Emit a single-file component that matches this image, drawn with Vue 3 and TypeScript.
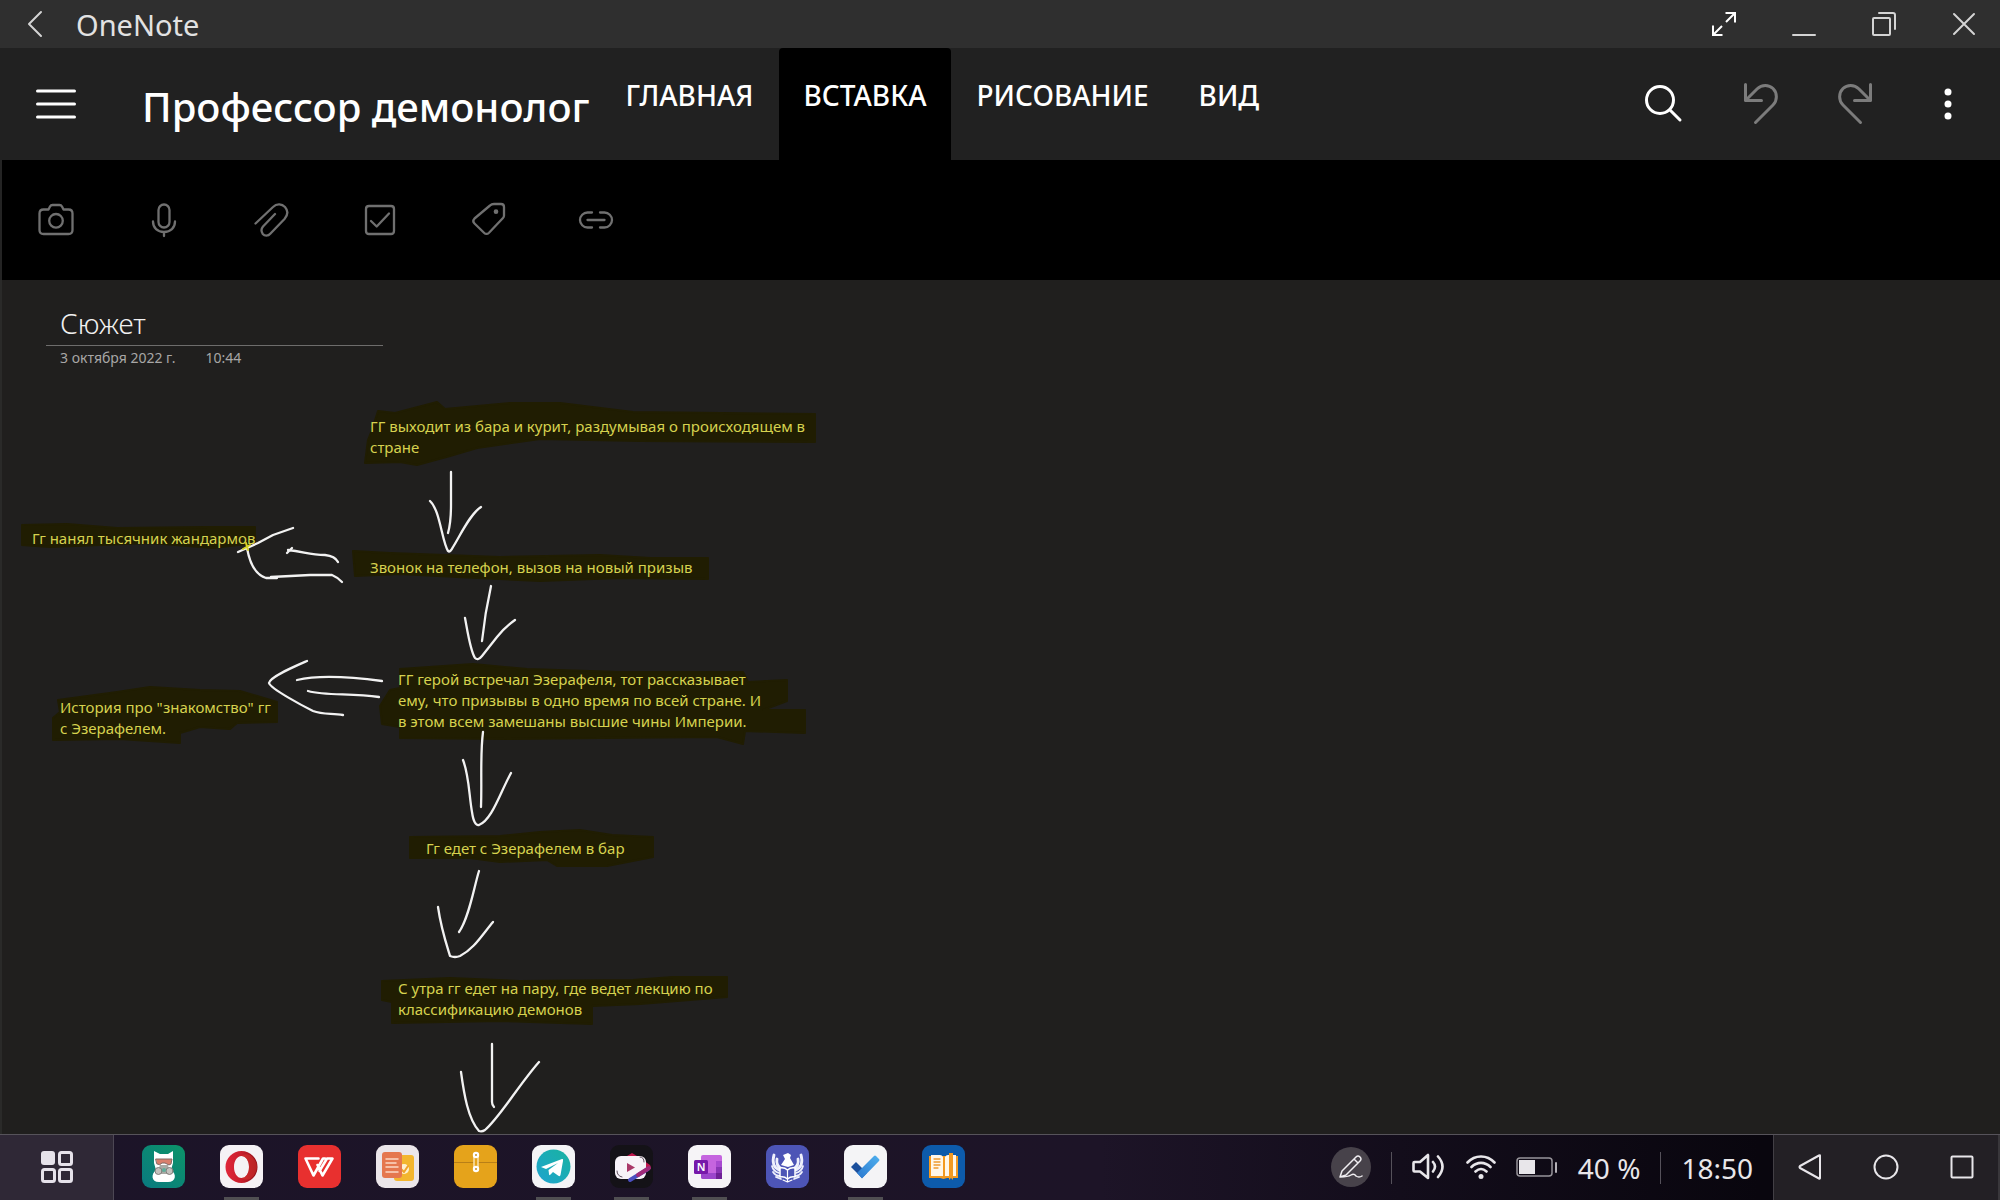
<script setup lang="ts">
interface Note {
  x: number
  y: number
  lines: string[]
}

const tabs = ['ГЛАВНАЯ', 'ВСТАВКА', 'РИСОВАНИЕ', 'ВИД']
const activeTab = 'ВСТАВКА'

const tools: { label: string; paths: string[] }[] = [
  {
    label: 'Камера',
    paths: [
      'M9.500 11.500h5l1.500-3q.8-1.500 2.500-1.500h7q1.700 0 2.500 1.500l1.500 3h5q4 0 4 4v16.500q0 4-4 4h-25q-4 0-4-4v-16.500q0-4 4-4z',
      'M22 16a6.800 6.800 0 1 1 0 13.600a6.800 6.800 0 1 1 0-13.600z',
    ],
  },
  {
    label: 'Запись звука',
    paths: [
      'M22 6.500a5.500 5.500 0 0 1 5.500 5.500v12a5.500 5.500 0 0 1-11 0v-12a5.500 5.500 0 0 1 5.500-5.500z',
      'M11 23.500c0 6.500 4.500 10.500 11 10.500s11-4 11-10.500M22 34v4',
    ],
  },
  {
    label: 'Вложение',
    paths: [
      'M5.500 25.500L23 9C27 5 32 6 35 9C38 12.500 38 17 34.500 21L20.500 35.500C18 38.500 14.500 38 12.800 36C11 33.500 11 31 13 28.500L25 16',
    ],
  },
  {
    label: 'Список дел',
    paths: [
      'M11 8h22q3 0 3 3v22q0 3-3 3h-22q-3 0-3-3v-22q0-3 3-3z',
      'M13 23l5.700 5.500L31 15.500',
    ],
  },
  {
    label: 'Тег',
    paths: [
      'M28 6h7q3 0 3 3v8.500q0 1.500-1 2.500L23 34.700q-2.500 2.500-5 0l-9.500-9.200q-2.500-2.500 0-5L24 7.500q1.500-1.500 4-1.500z',
      'M30 12.500a1.200 1.200 0 1 1 0 2.400a1.200 1.200 0 1 1 0-2.400z',
    ],
  },
  {
    label: 'Ссылка',
    paths: [
      'M18 14.500h-4.500a7.500 7.500 0 0 0 0 15H18M26 14.500h4.500a7.500 7.500 0 0 1 0 15H26M13.500 22h17',
    ],
  },
]

const notes: Note[] = [
  { x: 370, y: 136, lines: ['ГГ выходит из бара и курит, раздумывая о происходящем в', 'стране'] },
  { x: 32, y: 248, lines: ['Гг нанял тысячник жандармов'] },
  { x: 370, y: 277, lines: ['Звонок на телефон, вызов на новый призыв'] },
  {
    x: 398,
    y: 389,
    lines: [
      'ГГ герой встречал Эзерафеля, тот рассказывает',
      'ему, что призывы в одно время по всей стране. И',
      'в этом всем замешаны высшие чины Империи.',
    ],
  },
  { x: 60, y: 417, lines: ['История про "знакомство" гг', 'с Эзерафелем.'] },
  { x: 426, y: 558, lines: ['Гг едет с Эзерафелем в бар'] },
  { x: 398, y: 698, lines: ['С утра гг едет на пару, где ведет лекцию по', 'классификацию демонов'] },
]

const highlights = [
  'M378 411L395 413L437 402L445 409L510 403L560 403L633 412L815 414V442L640 441L540 439L477 448L450 456L417 465L400 462L365 463L368 440L372 430Z',
  'M353 551L390 553L500 557L600 555L650 558H708V579L620 578L540 581L457 577L400 574L355 576Z',
  'M400 669L473 664L527 669L620 672H743L748 682L787 680V701L763 710H805V733L745 731L743 744L717 737L600 738L507 739L400 738V727L382 724L380 706L390 690L400 688Z',
  'M410 837L500 836L540 832L580 830L612 835L653 837V857L607 866L557 866L547 860L500 862L470 858H410Z',
  'M382 981L450 978L520 981L633 980L673 977H727V997L640 1004L592 1006V1024L500 1021L392 1023V1002L382 1000Z',
  'M22 525L67 524L117 528L207 527H255V543L213 548L150 543L50 547L22 545Z',
  'M58 700L117 692L150 687L200 690L240 691L277 702V722L237 723L230 729L200 727L180 733V743L120 739L53 740V718L60 712Z',
]

const strokes = [
  'M451 472V505C451 518 450 526 448 533',
  'M430 501C440 510 442 542 448 551Q450 553 453 547C460 536 470 514 481 507',
  'M491 586C487 604 484 622 482 641',
  'M465 618C467 628 470 650 475 658Q478 661 482 656L497 637Q505 627 515 620',
  'M483 732C480 755 482 780 481 807',
  'M463 760C469 775 469 795 472 812Q474 826 479 825C492 820 500 793 511 773',
  'M479 871C474 887 469 918 459 932',
  'M438 907C441 928 446 943 450 956Q455 958 460 956C474 949 482 935 493 922',
  'M492 1044V1102Q492 1105 494 1107',
  'M461 1072C464 1094 468 1119 479 1131Q482 1132 485 1130C500 1117 518 1086 539 1062',
  'M238 552L258 543L273 535L293 528',
  'M247 548C250 565 256 575 266 578H277',
  'M271 577L310 575H332Q337 577 342 582',
  'M287 553L292 548M288 550C305 552 310 555 325 555Q335 556 338 562',
  'M307 661C291 668 270 677 269 683C271 689 303 706 313 711C323 715 332 713 343 715',
  'M297 680C318 675 352 677 382 681',
  'M308 691C326 696 350 693 379 697',
]
</script>

<template>
  <div class="app">
    <header class="titlebar">
      <button class="icon-btn back" aria-label="Назад">
        <svg width="16" height="28" viewBox="0 0 16 28"><path d="M14 2L2 14L14 26" /></svg>
      </button>
      <span class="app-name">OneNote</span>
      <div class="window-controls">
        <button class="icon-btn" aria-label="Развернуть">
          <svg class="bright" width="24" height="24" viewBox="0 0 24 24"><path d="M13.500 1H23V10.500M22.500 1.500L14 10M1 13.500V23H10.500M1.500 22.500L10 14" /></svg>
        </button>
        <button class="icon-btn" aria-label="Свернуть">
          <svg width="24" height="24" viewBox="0 0 24 24"><path d="M1 23H23" /></svg>
        </button>
        <button class="icon-btn" aria-label="Восстановить">
          <svg width="24" height="24" viewBox="0 0 24 24"><rect x="1" y="6" width="17" height="17" rx="1" /><path d="M7 1H21Q23 1 23 3V17" /></svg>
        </button>
        <button class="icon-btn" aria-label="Закрыть">
          <svg width="24" height="24" viewBox="0 0 24 24"><path d="M2 2L22 22M22 2L2 22" /></svg>
        </button>
      </div>
    </header>

    <div class="header">
      <button class="icon-btn menu" aria-label="Меню">
        <svg width="40" height="32" viewBox="0 0 40 32"><path d="M1.500 3H38.500M1.500 16H38.500M1.500 29H38.500" /></svg>
      </button>
      <h1>Профессор демонолог</h1>
      <nav class="tabs">
        <button v-for="tab in tabs" :key="tab" class="tab" :class="{ active: tab === activeTab }">{{ tab }}</button>
      </nav>
      <div class="actions">
        <button class="icon-btn" aria-label="Поиск">
          <svg class="search" width="48" height="48" viewBox="0 0 48 48"><circle cx="18" cy="20" r="13.500" /><path d="M28 30L38 40" /></svg>
        </button>
        <button class="icon-btn" aria-label="Отменить">
          <svg class="dim" width="48" height="48" viewBox="0 0 48 48"><path d="M9.500 4.500V20.500H25.500M9.500 20.500L21 9C26 4 33 4.500 37 8.500C41.500 13 41.500 20.500 37 25L19.500 42.500" /></svg>
        </button>
        <button class="icon-btn" aria-label="Повторить">
          <svg class="dim" width="48" height="48" viewBox="0 0 48 48"><path d="M40.500 4.500V20.500H24.500M40.500 20.500L29 9C24 4 17 4.500 13 8.500C8.500 13 8.500 20.500 13 25L30.500 42.500" /></svg>
        </button>
        <button class="icon-btn" aria-label="Ещё">
          <svg class="dots" width="48" height="48" viewBox="0 0 48 48"><circle cx="24" cy="12" r="3.500" /><circle cx="24" cy="24" r="3.500" /><circle cx="24" cy="36" r="3.500" /></svg>
        </button>
      </div>
    </div>

    <div class="toolbar">
      <button v-for="tool in tools" :key="tool.label" class="icon-btn" :aria-label="tool.label">
        <svg width="44" height="44" viewBox="0 0 44 44"><path v-for="d in tool.paths" :key="d" :d="d" /></svg>
      </button>
    </div>

    <main class="canvas">
      <svg class="layer" width="900" height="854" viewBox="0 280 900 854">
        <path v-for="d in highlights" :key="d" class="marker" :d="d" />
      </svg>
      <div class="page-title">
        <h2>Сюжет</h2>
        <p><time>3 октября 2022 г.</time><time>10:44</time></p>
      </div>
      <p v-for="note in notes" :key="note.lines[0]" class="note" :style="{ left: note.x + 'px', top: note.y + 'px' }">
        <template v-for="(line, i) in note.lines" :key="line"><br v-if="i > 0" />{{ line }}</template>
      </p>
      <svg class="layer" width="900" height="854" viewBox="0 280 900 854">
        <path v-for="d in strokes" :key="d" class="ink" :d="d" />
        <path class="cross" d="M243 549L250 545M246 543L248 550" />
      </svg>
    </main>

    <footer class="taskbar">
      <button class="icon-btn launcher" aria-label="Все приложения">
        <svg width="32" height="32" viewBox="0 0 32 32">
          <rect class="solid" x="0" y="0" width="14" height="14" rx="3" />
          <rect x="18.500" y="1.500" width="12" height="12" rx="2" />
          <rect x="1.500" y="18.500" width="12" height="12" rx="2" />
          <rect x="18.500" y="18.500" width="12" height="12" rx="2" />
        </svg>
      </button>
      <div class="dock">
        <button class="dock-app" aria-label="Кот">
          <svg viewBox="0 0 43 43">
            <defs><linearGradient id="gCat" x1="0" y1="1" x2="1" y2="0"><stop offset="0" stop-color="#0a7a80" /><stop offset="1" stop-color="#0c9468" /></linearGradient></defs>
            <rect width="43" height="43" rx="9" fill="url(#gCat)" />
            <path d="M12 6L18 9H26L31 6L31 18L29 25C35 29 34 37 26 37H17C9 37 9 29 14 25L12 18Z" fill="#fff" />
            <path d="M14 14H30L29 19Q27 21 25 19L23 18H20Q18 21 15 19Z" fill="#d97f6c" stroke="#806a66" stroke-width="1" />
            <path d="M18 20H26L28 29H15Z" fill="#a9aaa4" />
            <circle cx="16.500" cy="26" r="3.500" fill="#c5c1bd" stroke="#827d7b" />
            <circle cx="27.500" cy="26" r="3.500" fill="#c5c1bd" stroke="#827d7b" />
            <circle cx="22" cy="25" r="2" fill="#5fae9a" />
          </svg>
        </button>
        <button class="dock-app running" aria-label="Opera">
          <svg viewBox="0 0 43 43">
            <defs><linearGradient id="gOpera" x1="0" y1="0" x2="1" y2="0"><stop offset="0" stop-color="#e0263a" /><stop offset=".5" stop-color="#c81e2c" /><stop offset="1" stop-color="#8e1018" /></linearGradient></defs>
            <rect width="43" height="43" rx="9" fill="#f5f2f5" />
            <path fill-rule="evenodd" fill="url(#gOpera)" d="M21.500 6a16 16 0 1 1 0 32a16 16 0 1 1 0-32zM21.500 11c-4.500 0-7.500 5-7.500 11s3 11 7.500 11s7.500-5 7.500-11s-3-11-7.500-11z" />
            <path d="M21.500 11Q25 8 30 10Q37 15 37 22T30 34Q25 36 21.500 33Q29 32 29 22T21.500 11Z" fill="#d8332f" opacity=".55" />
          </svg>
        </button>
        <button class="dock-app" aria-label="WPS Office">
          <svg viewBox="0 0 43 43">
            <rect width="43" height="43" rx="9" fill="#e8302f" />
            <path d="M20.500 13.500H7.500L15.500 30.500L25 13.500H27M19.500 20L24.500 30.500L34.500 13.500H29L21.500 26" fill="none" stroke="#fff" stroke-width="2.600" stroke-linejoin="round" />
          </svg>
        </button>
        <button class="dock-app" aria-label="Заметки">
          <svg viewBox="0 0 43 43">
            <rect width="43" height="43" rx="9" fill="#ebe6ea" />
            <rect x="18" y="10" width="20" height="26" rx="3" fill="#f3b62f" />
            <circle cx="28" cy="24" r="5" fill="#fdf0d0" />
            <path d="M25 24L28 27L32 21" fill="none" stroke="#f0a32a" stroke-width="2" />
            <rect x="6" y="7" width="20" height="26" rx="3" fill="#e5774f" />
            <path d="M10 14H22M10 18H20M10 22H22M10 27H22" stroke="#fbd9c6" stroke-width="1.500" />
          </svg>
        </button>
        <button class="dock-app" aria-label="Архиватор">
          <svg viewBox="0 0 43 43">
            <rect width="43" height="43" rx="9" fill="#e5a31b" />
            <path d="M0 17.500H19M25 17.500H43" stroke="#b87f17" stroke-width="1" />
            <path d="M20 10V24M24 10V24" stroke="#fff3d6" stroke-width="1.200" />
            <circle cx="22" cy="10" r="3.200" fill="#fff" /><circle cx="22" cy="24" r="3.200" fill="#fff" />
            <circle cx="22" cy="10" r="1" fill="#c89125" /><circle cx="22" cy="24" r="1" fill="#c89125" />
          </svg>
        </button>
        <button class="dock-app running" aria-label="Telegram">
          <svg viewBox="0 0 43 43">
            <defs><linearGradient id="gTg" x1="0" y1="1" x2="1" y2="0"><stop offset="0" stop-color="#1fa3cf" /><stop offset="1" stop-color="#18b3a0" /></linearGradient></defs>
            <rect width="43" height="43" rx="9" fill="#f4f4f6" />
            <circle cx="21.500" cy="21.500" r="17" fill="url(#gTg)" />
            <path d="M9 22L30 14Q31.500 13.500 31 16L28.500 30Q28 32 26 30.500L21 27L18 30Q17 30.500 17 29L16.500 25L26 18L14 24Z" fill="#fff" />
          </svg>
        </button>
        <button class="dock-app running" aria-label="Видео">
          <svg viewBox="0 0 43 43">
            <rect width="43" height="43" rx="9" fill="#141217" />
            <path d="M17 11L22 8L27 11L40 20Q42 23 38 26L20 36" fill="#c0184e" />
            <rect x="5" y="11" width="31" height="23" rx="6" fill="#f7f3f7" />
            <path d="M20 35L38 24" stroke="#4b4fc0" stroke-width="4" />
            <path d="M28 30L39 23" stroke="#a02a78" stroke-width="4" />
            <path d="M7 26Q7 31 12 32M30 12Q34 12 34 17" fill="none" stroke="#3a2838" stroke-width=".8" />
            <path d="M17 18L25 22.500L17 27Z" fill="#a93868" />
          </svg>
        </button>
        <button class="dock-app running" aria-label="OneNote">
          <svg viewBox="0 0 43 43">
            <rect width="43" height="43" rx="9" fill="#f6f4f7" />
            <rect x="13" y="10" width="21" height="24" rx="2" fill="#c564df" />
            <path d="M28 16H34V22H28Z" fill="#a84ad0" /><path d="M28 22H34V28H28Z" fill="#8a35b5" /><path d="M13 28H34V32Q34 34 32 34H15Q13 34 13 32Z" fill="#9c46cc" /><path d="M28 28H34V34H28Z" fill="#6f2196" />
            <rect x="6" y="15" width="14" height="14" rx="1.500" fill="#7719aa" />
            <text x="13" y="26" class="n-mark">N</text>
          </svg>
        </button>
        <button class="dock-app" aria-label="Библиотека">
          <svg viewBox="0 0 43 43">
            <rect width="43" height="43" rx="9" fill="#4d55b6" />
            <g fill="none" stroke="#eef0fc" stroke-linecap="round">
              <path d="M8 10C6 17 7 22 13 25M11 14C10 19 12 22 16 24M35 10C37 17 36 22 30 25M32 14C33 19 31 22 27 24" stroke-width="2.800" />
              <path d="M6 21C7 25 9 27 13 28M7 27C9 30 11 31 14 31M37 21C36 25 34 27 30 28M36 27C34 30 32 31 29 31M10 32L15 34M33 32L28 34" stroke-width="1.800" />
            </g>
            <path d="M17 10L22 8L25 10L24 13L28 20L22 22L15 20L19 14Z" fill="#fff" />
            <path d="M14 23Q18 22 21.500 25Q25 22 29 23V32Q25 31 21.500 34Q18 31 14 32Z" fill="#4d55b6" stroke="#fff" stroke-width="1.500" />
            <path d="M21.500 25V36M17 35L21.500 37L26 35" fill="none" stroke="#fff" stroke-width="1.200" />
          </svg>
        </button>
        <button class="dock-app running" aria-label="Задачи">
          <svg viewBox="0 0 43 43">
            <defs><linearGradient id="gTodo" x1="0" y1="1" x2="1" y2="0"><stop offset="0" stop-color="#2a78cf" /><stop offset="1" stop-color="#4fb0ee" /></linearGradient></defs>
            <rect width="43" height="43" rx="9" fill="#f4f4f6" />
            <path d="M7 22L12 17L23 28L18 33Z" fill="#1b4f9c" />
            <path d="M13 28L30 11Q31 10 32 11L35 14Q36 15 35 16L18 33.500Z" fill="url(#gTodo)" />
          </svg>
        </button>
        <button class="dock-app" aria-label="Книги">
          <svg viewBox="0 0 43 43">
            <rect width="43" height="43" rx="9" fill="#0d5bab" />
            <path d="M7 11H36V33H25L21.500 34L18 33H7Z" fill="#f39a21" />
            <path d="M9 10H18Q20 10 21 12V31H9ZM23 12Q24 10 26 10H34V31H23Z" fill="#fff7ea" />
            <path d="M12 14H18M12 17H18M12 20H18M12 23H16" stroke="#ee9a31" stroke-width="1.300" />
            <path d="M27 8H31V35L29 33L27 35Z" fill="#f39a21" />
          </svg>
        </button>
      </div>
      <div class="status">
        <button class="icon-btn pen" aria-label="Перо">
          <svg width="24" height="24" viewBox="0 0 24 24"><path d="M1 22L3 16L17 2Q19 0 21 2T21 6L7 20ZM15 4L19 8M1 22Q9 22 12 20T17 21Q20 23 23 21" /></svg>
        </button>
        <span class="rule"></span>
        <svg class="volume" width="32" height="28" viewBox="0 0 32 28"><path d="M1.500 10Q1.500 9 2.500 9H8L16 2V25L8 18.500H2.500Q1.500 18.500 1.500 17.500Z" /><path d="M21 9Q25 13.500 21 18.500M26 3.500Q35 13.500 26 24" /></svg>
        <svg class="wifi" width="30" height="26" viewBox="0 0 30 26"><path d="M1.500 8.500C9 .5 21 .5 28.500 8.500M5.500 13C11 7.500 19 7.500 24.500 13M9.500 17.500Q15 12.500 20.500 17.500" /><circle cx="15" cy="22.500" r="2.500" /></svg>
        <svg class="battery" width="42" height="20" viewBox="0 0 42 20"><rect class="case" x="1" y="1" width="35" height="18" rx="3" /><rect class="level" x="3" y="3" width="16" height="14" /><rect class="case-fill" x="39" y="5" width="2" height="11" rx="1" /></svg>
        <span class="percent">40 %</span>
        <span class="rule"></span>
        <time class="clock">18:50</time>
      </div>
      <div class="nav-keys">
        <button class="icon-btn" aria-label="Назад">
          <svg width="26" height="26" viewBox="0 0 26 26"><path d="M23 1.500V24Q23 25 22 24.500L3 14Q2 13 3 12L22 1.500Q23 1 23 1.500Z" /></svg>
        </button>
        <button class="icon-btn" aria-label="Домой">
          <svg width="26" height="26" viewBox="0 0 26 26"><circle cx="13" cy="13" r="11.500" /></svg>
        </button>
        <button class="icon-btn" aria-label="Недавние">
          <svg width="26" height="26" viewBox="0 0 26 26"><rect x="2.500" y="2.500" width="21" height="21" rx="1" /></svg>
        </button>
      </div>
    </footer>
  </div>
</template>

<style>
body {
  background: #201f1e;
}
</style>

<style scoped>
.app {
  display: flex;
  flex-direction: column;
  min-height: 100vh;
  font-family: "Noto Sans", "Liberation Sans", sans-serif;
  color: #fff;
  background: #201f1e;
}

button {
  margin: 0;
  padding: 0;
  border: 0;
  background: none;
  color: inherit;
  font: inherit;
}

svg {
  display: block;
  fill: none;
  stroke-linecap: round;
  stroke-linejoin: round;
}

h1, h2, p {
  margin: 0;
  font-weight: 400;
}

.icon-btn {
  display: flex;
  align-items: center;
  justify-content: center;
  flex: none;
}

/* Window title bar */
.titlebar {
  display: flex;
  align-items: center;
  height: 48px;
  padding: 0 16px 0 27px;
  background: #2f2f2f;
}

.titlebar svg {
  stroke: #d4d4d4;
  stroke-width: 2;
}

.titlebar svg.bright {
  stroke: #fff;
  stroke-width: 2;
  stroke-linecap: butt;
  stroke-linejoin: miter;
}

.app-name {
  margin-left: 33px;
  padding-top: 2px;
  font-size: 29px;
  line-height: 46px;
  color: #e2e2e2;
}

.window-controls {
  display: flex;
  gap: 40px;
  margin-left: auto;
}

.window-controls .icon-btn {
  width: 40px;
  height: 48px;
}

/* Notebook header */
.header {
  display: flex;
  align-items: center;
  height: 112px;
  padding: 0 28px 0 36px;
  background: #212121;
}

.menu svg {
  stroke: #fff;
  stroke-width: 3;
}

h1 {
  margin-left: 66px;
  padding-top: 6px;
  font-size: 40px;
  line-height: 56px;
  font-weight: 500;
  white-space: nowrap;
}

.tabs {
  display: flex;
  align-self: stretch;
  gap: 2px;
  margin-left: 12px;
}

.tab {
  padding: 0 24px 18px;
  font-size: 28px;
  font-weight: 500;
  border-radius: 4px 4px 0 0;
}

.tab.active {
  background: #000;
}

.actions {
  display: flex;
  gap: 46px;
  margin-left: auto;
}

.search {
  stroke: #fff;
  stroke-width: 3;
}

.dim {
  stroke: #7c7c7c;
  stroke-width: 3;
}

.dots {
  fill: #fff;
}

/* Insert toolbar */
.toolbar {
  display: flex;
  align-items: center;
  gap: 64px;
  height: 120px;
  padding-left: 32px;
  border-left: 2px solid #242424;
  background: #000;
}

.toolbar svg {
  stroke: #707070;
  stroke-width: 2.300;
}

/* Note page */
.canvas {
  position: relative;
  flex: 1;
  min-height: 840px;
  overflow: hidden;
  border-left: 2px solid #2a2a29;
}

.layer {
  position: absolute;
  top: 0;
  left: -2px;
}

.marker {
  fill: #201d02;
  stroke: #201d02;
  stroke-width: 2;
}

.ink {
  stroke: #f2f2f2;
  stroke-width: 2.300;
}

.cross {
  stroke: #d8d327;
  stroke-width: 2;
}

.page-title {
  position: relative;
  width: 337px;
  margin: 23px 0 0 44px;
}

.page-title h2 {
  padding: 0 0 2px 14px;
  font-size: 28px;
  line-height: 40px;
  font-weight: 300;
  color: #f0f0f0;
  border-bottom: 1px solid #6e6d6c;
}

.page-title p {
  display: flex;
  gap: 30px;
  padding-left: 14px;
  font-size: 14px;
  line-height: 24px;
  color: #a8a7a6;
}

.note {
  position: absolute;
  margin-left: -2px;
  font-size: 15px;
  line-height: 21px;
  color: #d6d24f;
  white-space: nowrap;
}

/* Taskbar */
.taskbar {
  display: flex;
  align-items: stretch;
  height: 65px;
  border-top: 1px solid #56535a;
  background: linear-gradient(90deg, #1c1428 0%, #1d1427 55%, #130d1b 70%, #09060e 88%);
}

.taskbar svg,
.taskbar .pen {
  margin-bottom: 2px;
}

.launcher {
  width: 114px;
  border-right: 1px solid #4d4754;
  background: #2f2836;
}

.launcher svg {
  stroke: #e6e2ea;
  stroke-width: 3;
}

.launcher .solid {
  fill: #e6e2ea;
  stroke: none;
}

.dock {
  display: flex;
  gap: 35px;
  padding-left: 28px;
}

.dock-app {
  position: relative;
  display: flex;
  align-items: center;
  width: 43px;
}

.dock-app svg {
  width: 43px;
  height: 43px;
}

.dock-app.running::after {
  content: "";
  position: absolute;
  bottom: 0;
  left: 4px;
  width: 35px;
  height: 3px;
  background: #504f52;
}

.n-mark {
  fill: #fff;
  font-size: 11px;
  font-weight: 600;
  text-anchor: middle;
}

.status {
  display: flex;
  align-items: center;
  margin-left: auto;
  color: #e8e6ea;
}

.pen {
  width: 40px;
  height: 40px;
  border-radius: 50%;
  background: #47424a;
}

.taskbar .pen svg {
  margin: 0;
  stroke: #f0eef2;
  stroke-width: 1.500;
}

.rule {
  width: 1px;
  height: 32px;
  margin: 0 20px;
  background: #55515a;
}

.volume, .wifi {
  stroke: #e8e6ea;
  stroke-width: 2.600;
}

.wifi {
  margin-left: 22px;
}

.wifi circle {
  fill: #e8e6ea;
  stroke: none;
}

.battery {
  margin-left: 20px;
}

.case {
  stroke: #97949a;
  stroke-width: 1.500;
}

.case-fill {
  fill: #b4b1b7;
}

.level {
  fill: #e8e6ea;
}

.percent, .clock {
  font-size: 28px;
  line-height: 40px;
}

.percent {
  margin-left: 20px;
}

.clock {
  margin-right: 20px;
}

.nav-keys {
  display: flex;
  align-items: center;
  gap: 36px;
  padding: 0 16px;
  border-left: 1px solid #423f45;
  border-right: 2px solid #39373b;
  background: #232025;
}

.nav-keys .icon-btn {
  width: 40px;
  height: 48px;
}

.nav-keys svg {
  stroke: #e8e6ea;
  stroke-width: 2;
}
</style>
